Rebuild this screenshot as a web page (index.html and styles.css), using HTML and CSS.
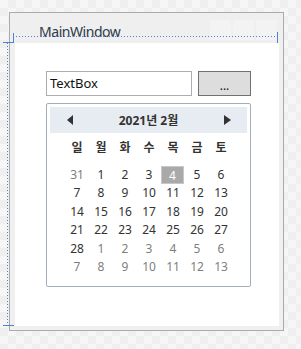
FILE: index.html
```html
<!DOCTYPE html>
<html lang="ko">
<head>
<meta charset="utf-8">
<title>MainWindow</title>
<link rel="stylesheet" href="styles.css">
</head>
<body>
<div class="stage">
  <div class="window">
    <div class="titlebar">
      <span class="title">MainWindow</span>
      <div class="caption-buttons">
        <span class="cap"></span><span class="cap"></span><span class="cap"></span>
      </div>
    </div>
    <div class="client">
      <div class="row">
        <div class="textbox">TextBox</div>
        <div class="button">...</div>
      </div>
      <div class="calendar">
        <div class="cal-header">
          <span class="arrow left"></span>
          <span class="month">2021년 2월</span>
          <span class="arrow right"></span>
        </div>
        <div class="dows">
          <span>일</span><span>월</span><span>화</span><span>수</span><span>목</span><span>금</span><span>토</span>
        </div>
        <div class="days">
          <span class="o">31</span><span>1</span><span>2</span><span>3</span><span class="sel">4</span><span>5</span><span>6</span>
          <span>7</span><span>8</span><span>9</span><span>10</span><span>11</span><span>12</span><span>13</span>
          <span>14</span><span>15</span><span>16</span><span>17</span><span>18</span><span>19</span><span>20</span>
          <span>21</span><span>22</span><span>23</span><span>24</span><span>25</span><span>26</span><span>27</span>
          <span>28</span><span class="o">1</span><span class="o">2</span><span class="o">3</span><span class="o">4</span><span class="o">5</span><span class="o">6</span>
          <span class="o">7</span><span class="o">8</span><span class="o">9</span><span class="o">10</span><span class="o">11</span><span class="o">12</span><span class="o">13</span>
        </div>
      </div>
    </div>
  </div>
  <div class="adorner top-line"></div>
  <div class="adorner top-tick-l"></div>
  <div class="adorner top-tick-r"></div>
  <div class="adorner left-line"></div>
  <div class="adorner left-tick-t"></div>
  <div class="adorner left-tick-b"></div>
</div>
</body>
</html>
```

FILE: styles.css
```css
* { box-sizing: border-box; }
html, body { margin: 0; padding: 0; }
body {
  width: 301px;
  height: 349px;
  overflow: hidden;
  font-family: "Noto Sans", "Noto Sans CJK KR", sans-serif;
}
.stage {
  position: relative;
  width: 301px;
  height: 349px;
  padding: 12px 0 0 9px;
  background-color: #f6f6f6;
  background-image: conic-gradient(#efefef 25%, transparent 0 50%, #efefef 0 75%, transparent 0);
  background-size: 16px 16px;
}
.window {
  width: 275px;
  height: 319px;
  border: 1px solid #ababab;
  background: #f0f0f0;
  display: flex;
  flex-direction: column;
  padding: 0 4px 4px 5px;
}
.titlebar {
  height: 30px;
  display: flex;
  align-items: flex-start;
  background: #efefef;
  margin: 0 -4px 0 -5px;
  padding: 0 6px 0 29px;
}
.title {
  font-size: 14px;
  color: #2e3a48;
  line-height: 18px;
  margin-top: 10px;
  letter-spacing: -0.45px;
}
.caption-buttons {
  margin-left: auto;
  display: flex;
  gap: 2px;
  margin-top: 7px;
}
.cap {
  width: 21px;
  height: 20px;
  background: #f3f3f3;
}
.client {
  flex: 1;
  background: #ffffff;
  padding: 28px 0 0 31px;
}
.row {
  display: flex;
  gap: 6px;
  height: 25px;
}
.textbox {
  width: 146px;
  height: 25px;
  border: 1px solid #abadb3;
  font-size: 13px;
  line-height: 22px;
  padding-left: 3px;
  color: #111;
}
.button {
  width: 53px;
  height: 25px;
  border: 1px solid #707070;
  background: #dddddd;
  font-size: 12px;
  text-align: center;
  line-height: 27px;
  color: #111;
}
.calendar {
  margin-top: 7px;
  width: 205px;
  height: 184px;
  border: 1px solid #a3aebb;
  border-radius: 2px;
  padding: 3px;
  background: #fff;
}
.cal-header {
  height: 26px;
  background: #e7ecf2;
  display: flex;
  align-items: center;
  padding: 0 16px 0 17px;
}
.month {
  flex: 1;
  text-align: center;
  font-size: 12px;
  font-weight: bold;
  color: #333;
}
.arrow {
  width: 0;
  height: 0;
  border-top: 5px solid transparent;
  border-bottom: 5px solid transparent;
}
.arrow.left { border-right: 6px solid #333; }
.arrow.right { border-left: 7px solid #333; }
.dows {
  display: grid;
  grid-template-columns: repeat(7, 24px);
  justify-content: center;
  margin-top: 5px;
  height: 20px;
  font-size: 12px;
  font-weight: bold;
  color: #333;
  line-height: 20px;
  text-align: center;
  padding-left: 1px;
}
.days {
  display: grid;
  grid-template-columns: repeat(7, 24px);
  grid-auto-rows: 18.4px;
  justify-content: center;
  margin-top: 8px;
  font-size: 12px;
  color: #333;
  text-align: center;
  line-height: 18px;
  padding-left: 1px;
}
.days .o { color: #808080; }
.days .sel {
  background: #a9a9a9;
  color: #fff;
  border: 1px solid #c8c8c8;
  line-height: 17px;
  margin-right: 1px;
}
.adorner { position: absolute; }
.top-line {
  left: 13px; top: 36px; width: 265px; height: 1px;
  background: repeating-linear-gradient(to right, #4f7fd6 0 1px, transparent 1px 3px);
}
.top-tick-l { left: 13px; top: 33px; width: 1px; height: 10px; background: #4f7fd6; }
.top-tick-r { left: 277px; top: 32px; width: 1px; height: 11px; background: #4f7fd6; }
.left-line {
  left: 7px; top: 43px; width: 1px; height: 282px;
  background: repeating-linear-gradient(to bottom, #4f7fd6 0 1px, transparent 1px 3px);
}
.left-tick-t { left: 3px; top: 42px; width: 11px; height: 1px; background: #4f7fd6; }
.left-tick-b { left: 3px; top: 325px; width: 11px; height: 1px; background: #4f7fd6; }
```
